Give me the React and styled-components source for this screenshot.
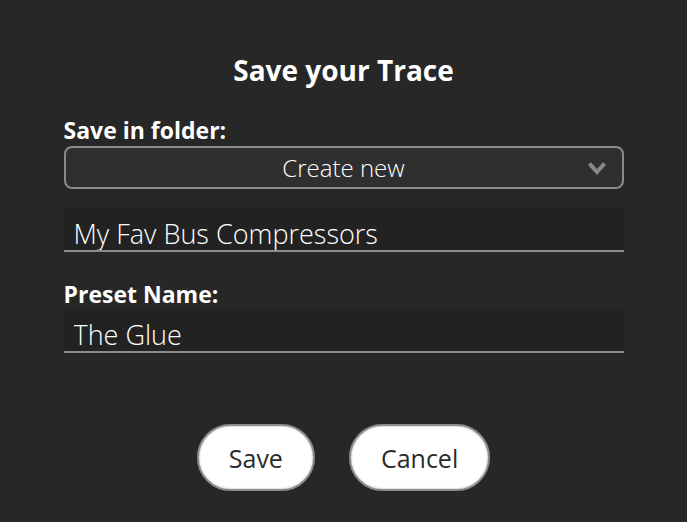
import React from "react";
import styled, { createGlobalStyle } from "styled-components";

const GlobalStyle = createGlobalStyle`
  html, body {
    margin: 0;
    padding: 0;
    background: #272727;
  }
  body {
    font-family: "Open Sans", "Liberation Sans", sans-serif;
    color: #ffffff;
  }
  * { box-sizing: border-box; }
`;

const Dialog = styled.div`
  width: 560px;
  margin: 0 auto;
  padding-top: 53px;
  display: flex;
  flex-direction: column;
`;

const Title = styled.h1`
  margin: 0;
  height: 34px;
  line-height: 34px;
  text-align: center;
  font-size: 28px;
  font-weight: 700;
  color: #ffffff;
`;

const Label = styled.label`
  display: block;
  margin-top: ${(p) => p.$mt}px;
  height: 24px;
  line-height: 24px;
  font-size: 23px;
  font-weight: 700;
  color: #ffffff;
`;

const Select = styled.div`
  margin-top: 4px;
  height: 43px;
  border: 2px solid #8a8a8a;
  border-radius: 8px;
  background: #2f2f2f;
  display: grid;
  grid-template-columns: 44px 1fr 44px;
  align-items: center;
`;

const SelectValue = styled.span`
  grid-column: 2;
  text-align: center;
  font-size: 24px;
  font-weight: 300;
  color: #ffffff;
`;

const Chevron = styled.svg`
  grid-column: 3;
  justify-self: center;
  margin-right: 5px;
  width: 20px;
  height: 14px;
`;

const TextInput = styled.input`
  display: block;
  width: 100%;
  margin-top: ${(p) => p.$mt}px;
  height: 44px;
  padding: 9px 10px 0;
  border: none;
  border-bottom: 2px solid #8c8c8c;
  background: #222222;
  color: #ffffff;
  font-family: "Open Sans", "Liberation Sans", sans-serif;
  font-size: 27px;
  font-weight: 300;
  outline: none;
`;

const Actions = styled.div`
  margin-top: 71px;
  display: flex;
  justify-content: center;
  gap: 34px;
`;

const PillButton = styled.button`
  height: 67px;
  padding: 0 30px;
  border-radius: 34px;
  border: 2px solid #8d8d8d;
  background: #ffffff;
  box-shadow: inset 0 0 2px rgba(0, 0, 0, 0.35);
  color: #2b2b2b;
  font-family: "Open Sans", "Liberation Sans", sans-serif;
  font-size: 25px;
  font-weight: 400;
  cursor: pointer;
`;

export default function App() {
  return (
    <>
      <GlobalStyle />
      <Dialog>
        <Title>Save your Trace</Title>
        <Label $mt={31}>Save in folder:</Label>
        <Select>
          <SelectValue>Create new</SelectValue>
          <Chevron viewBox="0 0 20 14" aria-hidden="true">
            <path
              d="M2.5 2.5 L10 11 L17.5 2.5"
              fill="none"
              stroke="#8a8a8a"
              strokeWidth="4"
              strokeLinecap="butt"
              strokeLinejoin="miter"
            />
          </Chevron>
        </Select>
        <TextInput $mt={19} defaultValue="My Fav Bus Compressors" />
        <Label $mt={30}>Preset Name:</Label>
        <TextInput $mt={3} defaultValue="The Glue" />
        <Actions>
          <PillButton>Save</PillButton>
          <PillButton>Cancel</PillButton>
        </Actions>
      </Dialog>
    </>
  );
}
